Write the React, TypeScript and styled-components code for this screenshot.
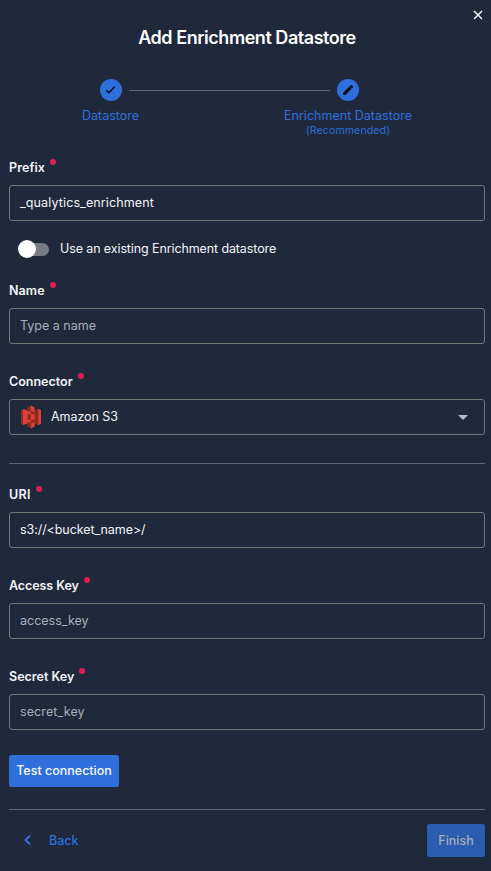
import React from "react";
import styled, { createGlobalStyle } from "styled-components";

const GlobalStyle = createGlobalStyle`
  * { box-sizing: border-box; }
  body { margin: 0; background: #20283c; }
`;

const Dialog = styled.main`
  display: flex;
  flex-direction: column;
  width: 491px;
  height: 871px;
  padding: 0 6px 0 9px;
  background: #20283c;
  color: #f3f4f7;
  font-family: Inter, "Liberation Sans", sans-serif;
  font-size: 12.5px;
  line-height: 16px;
  white-space: nowrap;
  overflow: hidden;
`;

const TopBar = styled.div`
  display: flex;
  justify-content: flex-end;
  height: 27px;
  padding-top: 10px;
  padding-right: 2px;
`;

const CloseButton = styled.button`
  display: flex;
  width: 10px;
  height: 10px;
  padding: 0;
  border: 0;
  background: none;
  color: #fff;
`;

const Title = styled.h1`
  margin: 0;
  height: 22px;
  font-size: 18px;
  font-weight: 600;
  line-height: 22px;
  letter-spacing: -0.46px;
  text-align: center;
  color: #fff;
`;

const Stepper = styled.div`
  display: grid;
  grid-template-columns: 63px 1fr 136px;
  height: 102px;
  padding: 30px 69px 0 70px;
`;

const Step = styled.div`
  display: flex;
  flex-direction: column;
  align-items: center;
  color: #2f6fdb;
`;

const StepBadge = styled.span`
  display: flex;
  align-items: center;
  justify-content: center;
  flex: none;
  width: 22px;
  height: 22px;
  border-radius: 50%;
  background: #2f6fdb;
  color: #080c14;
`;

const StepName = styled.span`
  margin-top: 7px;
  letter-spacing: 0.02px;
`;

const StepNote = styled.span`
  font-size: 10.5px;
  line-height: 13px;
  letter-spacing: 0.15px;
`;

const StepLine = styled.span`
  height: 1px;
  margin: 11px -50px 0 -13px;
  background: #5e6475;
`;

const Field = styled.section<{ $after: number }>`
  margin-bottom: ${(p) => p.$after}px;
`;

const Label = styled.div<{ $spacing: number }>`
  display: flex;
  align-items: center;
  gap: 5px;
  height: 34px;
  font-weight: 600;
  letter-spacing: ${(p) => p.$spacing}px;
`;

const Required = styled.i`
  width: 6px;
  height: 6px;
  margin-bottom: 12px;
  border-radius: 50%;
  background: #e11d55;
`;

const InputBox = styled.div<{ $muted?: boolean }>`
  display: flex;
  align-items: center;
  height: 36px;
  padding: 0 16px 0 10px;
  border: 1px solid #74757a;
  border-radius: 3px;
  color: ${(p) => (p.$muted ? "#a9adb7" : "#f3f4f7")};
`;

const Value = styled.span<{ $spacing?: number }>`
  letter-spacing: ${(p) => p.$spacing ?? 0}px;
`;

const ConnectorName = styled(Value)`
  flex: 1;
  margin-left: 9px;
`;

const ToggleRow = styled.div`
  display: flex;
  align-items: center;
  height: 18px;
  margin: -1px 0 16px 8px;
  gap: 11px;
`;

const Track = styled.span`
  display: flex;
  align-items: center;
  width: 30px;
  height: 13px;
  margin-left: 2px;
  border-radius: 7px;
  background: #757b87;
`;

const Knob = styled.span`
  flex: none;
  width: 18px;
  height: 18px;
  margin-left: -1px;
  border-radius: 50%;
  background: #fff;
`;

const Divider = styled.hr<{ $before?: number }>`
  flex: none;
  width: 100%;
  height: 1px;
  margin: ${(p) => p.$before ?? 0}px 0 14px;
  border: 0;
  background: #5e6573;
`;

const Button = styled.button<{ $w: number; $h: number; $dimmed?: boolean }>`
  display: flex;
  align-items: center;
  justify-content: center;
  flex: none;
  width: ${(p) => p.$w}px;
  height: ${(p) => p.$h}px;
  padding: 0;
  border: 0;
  border-radius: 2.5px;
  background: ${(p) => (p.$dimmed ? "#2a5cb0" : "#2f6fdb")};
  color: ${(p) => (p.$dimmed ? "#a5acba" : "#f5f8fe")};
  font: 500 12.5px/16px Inter, "Liberation Sans", sans-serif;
`;

const Footer = styled.footer`
  display: flex;
  align-items: center;
  justify-content: space-between;
`;

const BackButton = styled.button`
  display: flex;
  align-items: center;
  gap: 18px;
  padding: 0 0 0 15px;
  border: 0;
  background: none;
  color: #2f6fdb;
  font: 500 12.5px/16px Inter, "Liberation Sans", sans-serif;
`;

const BackArrow = styled.svg`
  margin-top: -1px;
`;

const S3Logo = () => (
  <svg width="22" height="24" viewBox="0 0 22 24">
    <path d="M1 5l2.500-1.200v16.400L1 19z" fill="#8c2a23" />
    <path d="M3 4l8 2.500v11L3 20z" fill="#dc3f37" />
    <path d="M18.500 3.800L11 6.500v11l7.500 2.700z" fill="#8c2a23" />
    <path d="M21 5l-2.800-1.300v16.600L21 19z" fill="#dc3f37" />
    <path d="M11 .5L7.300 2.400v4.400L11 6z" fill="#8c2a23" />
    <path d="M11 .5l3.700 1.900v4.400L11 6z" fill="#dc3f37" />
    <path d="M7.300 9.200L11 8.700v6.600l-3.700-.5z" fill="#9c2d26" />
    <path d="M14.700 9.200L11 8.700v6.600l3.700-.5z" fill="#dc3f37" />
    <path d="M7.300 17.200L11 18v5.500l-3.700-1.900z" fill="#8c2a23" />
    <path d="M14.700 17.200L11 18v5.500l3.700-1.900z" fill="#dc3f37" />
  </svg>
);

const RequiredLabel = ({ children, spacing = 0 }: { children: string; spacing?: number }) => (
  <Label $spacing={spacing}>
    <span>{children}</span>
    <Required />
  </Label>
);

export default function App() {
  return (
    <>
      <GlobalStyle />
      <Dialog>
        <TopBar>
          <CloseButton aria-label="Close">
            <svg width="10" height="10" viewBox="0 0 10 10" stroke="currentColor" strokeWidth="1.4">
              <path d="M1 1l8 8M9 1L1 9" />
            </svg>
          </CloseButton>
        </TopBar>
        <Title>Add Enrichment Datastore</Title>
        <Stepper>
          <Step>
            <StepBadge>
              <svg width="22" height="22" viewBox="0 0 22 22" fill="none" stroke="currentColor" strokeWidth="1.4">
                <path d="M6.300 11.300l2.600 2.500L14.700 7.700" />
              </svg>
            </StepBadge>
            <StepName>Datastore</StepName>
          </Step>
          <StepLine />
          <Step>
            <StepBadge>
              <svg width="22" height="22" viewBox="0 0 22 22" fill="currentColor">
                <path d="M6.200 13.700l5.900-5.900 2.200 2.200-5.900 5.900H6.200zM12.400 7.500l1.300-1.300q.6-.5 1.100 0l1.100 1.100q.5.600 0 1.100l-1.300 1.300z" />
              </svg>
            </StepBadge>
            <StepName>Enrichment Datastore</StepName>
            <StepNote>(Recommended)</StepNote>
          </Step>
        </Stepper>

        <Field $after={20}>
          <RequiredLabel spacing={0.1}>Prefix</RequiredLabel>
          <InputBox><Value $spacing={0.12}>_qualytics_enrichment</Value></InputBox>
        </Field>
        <ToggleRow>
          <Track><Knob /></Track>
          <Value $spacing={-0.11}>Use an existing Enrichment datastore</Value>
        </ToggleRow>
        <Field $after={21}>
          <RequiredLabel spacing={0.1}>Name</RequiredLabel>
          <InputBox $muted><Value>Type a name</Value></InputBox>
        </Field>
        <Field $after={28}>
          <RequiredLabel>Connector</RequiredLabel>
          <InputBox>
            <S3Logo />
            <ConnectorName $spacing={-0.05}>Amazon S3</ConnectorName>
            <svg width="10" height="5" viewBox="0 0 10 5"><path d="M0 0h10L5 5z" fill="#b9bdc6" /></svg>
          </InputBox>
        </Field>
        <Divider />
        <Field $after={21}>
          <RequiredLabel spacing={0.3}>URI</RequiredLabel>
          <InputBox><Value $spacing={-0.07}>{"s3://<bucket_name>/"}</Value></InputBox>
        </Field>
        <Field $after={21}>
          <RequiredLabel spacing={-0.08}>Access Key</RequiredLabel>
          <InputBox $muted><Value>access_key</Value></InputBox>
        </Field>
        <Field $after={25}>
          <RequiredLabel>Secret Key</RequiredLabel>
          <InputBox $muted><Value $spacing={0.1}>secret_key</Value></InputBox>
        </Field>
        <Button $w={110} $h={32}>Test connection</Button>
        <Divider $before={22} />
        <Footer>
          <BackButton>
            <BackArrow width="7" height="10" viewBox="0 0 7 10" fill="none" stroke="currentColor" strokeWidth="1.9">
              <path d="M6 .7L1.400 5 6 9.300" />
            </BackArrow>
            <span>Back</span>
          </BackButton>
          <Button $w={58} $h={33} $dimmed>Finish</Button>
        </Footer>
      </Dialog>
    </>
  );
}
